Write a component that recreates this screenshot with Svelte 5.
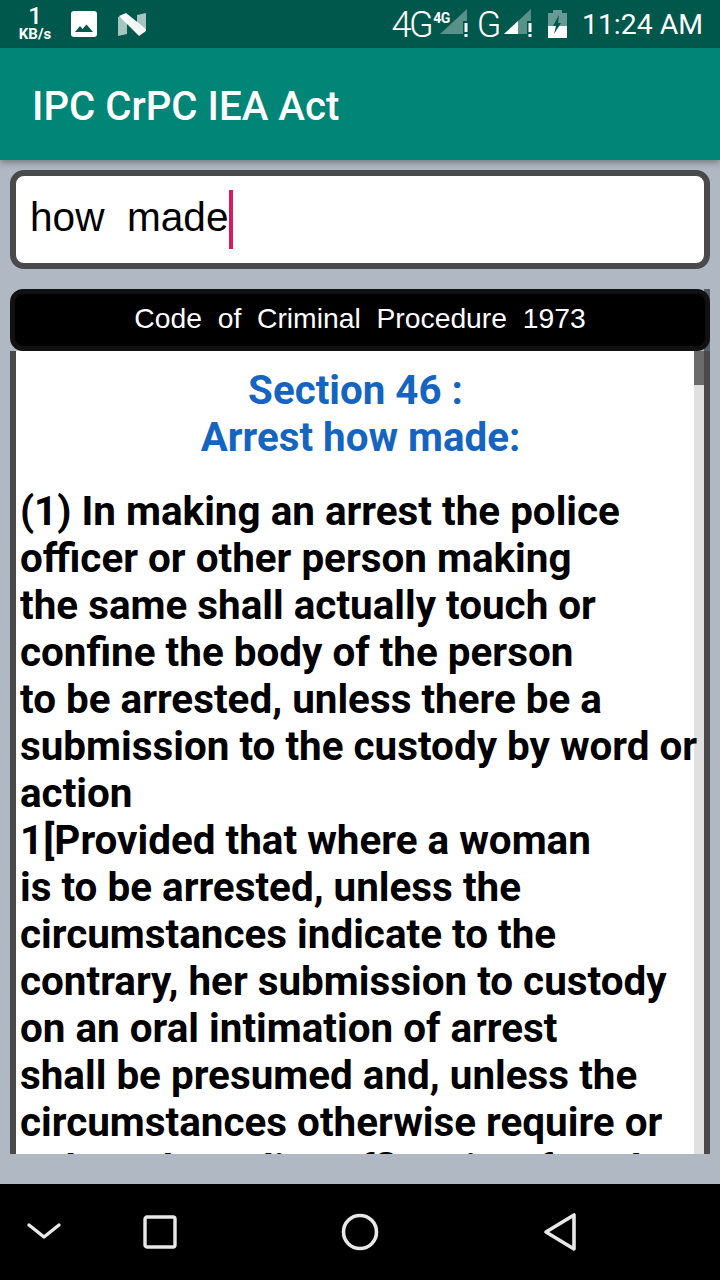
<script lang="ts">
const lines = [
	"(1) In making an arrest the police",
	"officer or other person making",
	"the same shall actually touch or",
	"confine the body of the person",
	"to be arrested, unless there be a",
	"submission to the custody by word or",
	"action",
	"1[Provided that where a woman",
	"is to be arrested, unless the",
	"circumstances indicate to the",
	"contrary, her submission to custody",
	"on an oral intimation of arrest",
	"shall be presumed and, unless the",
	"circumstances otherwise require or",
	"unless the police officer is a female"
];
</script>

<div class="screen">
	<div class="statusbar">
		<div class="status-left">
			<div class="speed">
				<span class="speed-num">1</span>
				<span class="speed-unit">KB/s</span>
			</div>
			<svg class="ic-image" width="26" height="26" viewBox="0 0 26 26">
				<path fill="#fff" fill-rule="evenodd" d="M3 0h20a3 3 0 0 1 3 3v20a3 3 0 0 1-3 3H3a3 3 0 0 1-3-3V3a3 3 0 0 1 3-3zM4 21h18l-6.500-7.500-4 4.500-2.500-3z" />
			</svg>
			<svg class="ic-n" width="28" height="23" viewBox="0 0 28 23">
				<path fill="#fff" fill-opacity="0.65" d="M0 4l9-2v19l-9 2zM19 2l9-2v16l-9-6z" />
				<path fill="#fff" fill-opacity="0.95" d="M1 3l7-3 20 16v2l-7 5z" />
			</svg>
		</div>
		<div class="status-right">
			<span class="net">4G</span>
			<span class="net-small">4G</span>
			<svg class="signal" width="28" height="28" viewBox="0 0 28 28">
				<path fill="#fff" fill-opacity="0.35" d="M0 25L27 0v12h-4v13z" />
				<path fill="#fff" d="M24.500 14h3v9h-3zM24.500 25h3v3h-3z" />
			</svg>
			<span class="net g">G</span>
			<svg class="signal-two" width="28" height="28" viewBox="0 0 28 28">
				<path fill="#fff" fill-opacity="0.35" d="M0 25L27 0v12h-4v13z" />
				<path fill="#fff" d="M0 25l14-13v13z" />
				<path fill="#fff" d="M24.500 14h3v9h-3zM24.500 25h3v3h-3z" />
			</svg>
			<svg class="battery" width="19" height="28" viewBox="0 0 19 28">
				<path fill="#fff" fill-opacity="0.4" d="M5 0h9v3h5v13H0V3h5z" />
				<path fill="#fff" d="M0 16h19v12H0z" />
				<path fill="#00574b" d="M11 5L5 16h3l-2 8 7-11h-3z" />
			</svg>
			<span class="clock">11:24 AM</span>
		</div>
	</div>

	<header class="toolbar">IPC CrPC IEA Act</header>

	<main class="content">
		<div class="search">
			<span class="query">how&nbsp; made</span><span class="caret"></span>
		</div>

		<section class="result">
			<div class="result-title">Code &nbsp;of &nbsp;Criminal &nbsp;Procedure &nbsp;1973</div>
			<div class="result-body">
				<div class="text">
					<h2>Section 46 :&nbsp;<br />Arrest how made:</h2>
					{#each lines as line}
						<div class="line">{line}</div>
					{/each}
				</div>
				<div class="scrolltrack"><div class="scrollthumb"></div></div>
			</div>
		</section>
	</main>

	<nav class="navbar">
		<svg width="36" height="24" viewBox="0 0 36 24">
			<path d="M3 5l15 12L33 5" fill="none" stroke="#e8e8e8" stroke-width="3.4" stroke-linecap="round" stroke-linejoin="round" />
		</svg>
		<svg width="36" height="36" viewBox="0 0 36 36">
			<rect x="3" y="3" width="30" height="30" rx="2" fill="none" stroke="#e8e8e8" stroke-width="3.4" />
		</svg>
		<svg width="40" height="40" viewBox="0 0 40 40">
			<circle cx="20" cy="20" r="16.500" fill="none" stroke="#e8e8e8" stroke-width="3.6" />
		</svg>
		<svg width="36" height="40" viewBox="0 0 36 40">
			<path d="M32 3v34L4 20z" fill="none" stroke="#e8e8e8" stroke-width="3.6" stroke-linejoin="round" />
		</svg>
	</nav>
</div>

<style>
:global(body) {
	margin: 0;
	background: #b0b8c3;
}
.screen {
	width: 720px;
	height: 1280px;
	display: flex;
	flex-direction: column;
	overflow: hidden;
	font-family: Roboto, sans-serif;
}
.statusbar {
	height: 48px;
	flex: none;
	background: #00574b;
	color: #fff;
	display: flex;
	justify-content: space-between;
	align-items: center;
	padding: 0 17px 0 18px;
}
.status-left,
.status-right {
	display: flex;
	align-items: center;
}
.speed {
	display: flex;
	flex-direction: column;
	align-items: center;
	width: 34px;
	font-weight: 500;
}
.speed-num {
	font-size: 24px;
	line-height: 21px;
	height: 21px;
}
.speed-unit {
	font-size: 15px;
	line-height: 15px;
	font-weight: 700;
}
.ic-image {
	margin-left: 19px;
}
.ic-n {
	margin-left: 21px;
}
.net {
	font-size: 36px;
	font-weight: 300;
	letter-spacing: -2.5px;
	line-height: 1;
	margin-top: 2px;
}
.net-small {
	font-size: 14px;
	font-weight: 700;
	letter-spacing: -0.5px;
	align-self: flex-start;
	margin: 5px 0 0 2px;
	position: relative;
}
.signal {
	margin: 0 0 2px -10px;
}
.net.g {
	margin: 2px 5px 0 9px;
}
.signal-two {
	margin-bottom: 2px;
}
.battery {
	margin: 0 15px 0 16px;
}
.clock {
	font-size: 28.4px;
	line-height: 1;
	margin-top: 3px;
}
.toolbar {
	height: 112px;
	flex: none;
	box-sizing: border-box;
	background: #008577;
	color: #fff;
	font-size: 40.2px;
	font-weight: 500;
	line-height: 1;
	display: flex;
	align-items: center;
	padding: 6px 32px 0;
	box-shadow: 0 3px 6px rgba(0, 0, 0, 0.3);
	position: relative;
}
.content {
	flex: 1;
	min-height: 0;
	display: flex;
	flex-direction: column;
	gap: 20px;
	padding: 10px 10px 30px;
}
.search {
	height: 99px;
	flex: none;
	box-sizing: border-box;
	border: 6px solid #4a4a4a;
	border-radius: 14px;
	background: #fff;
	display: flex;
	align-items: center;
	padding: 0 0 0 14px;
	font-family: "Liberation Sans", sans-serif;
	font-size: 40.6px;
	color: #000;
}
.query {
	margin-top: -4px;
}
.caret {
	width: 4px;
	height: 59px;
	background: #d81b60;
}
.result {
	flex: 1;
	min-height: 0;
	display: flex;
	flex-direction: column;
	background: linear-gradient(to left, #56606c 6px, transparent 6px);
}
.result-title {
	height: 62px;
	flex: none;
	box-sizing: border-box;
	background: #000;
	border: 5px solid #111;
	border-radius: 13px;
	padding-bottom: 3px;
	color: #fff;
	font-family: "Liberation Sans", sans-serif;
	font-size: 28.3px;
	display: flex;
	align-items: center;
	justify-content: center;
}
.result-body {
	flex: 1;
	min-height: 0;
	display: flex;
	background: #fff;
	border-left: 6px solid #4a4a4a;
	border-right: 6px solid #4a4a4a;
	overflow: hidden;
}
.text {
	flex: 1;
	min-width: 0;
	padding: 16px 0 0 4px;
	color: #000;
	font-weight: 700;
	font-size: 40.4px;
	line-height: 47px;
	white-space: nowrap;
	position: relative;
	z-index: 1;
}
h2 {
	margin: 0 -7px 27px 0;
	text-align: center;
	color: #1565c0;
	font-size: 40.3px;
	line-height: 47px;
	font-weight: 700;
}
.scrolltrack {
	width: 10px;
	flex: none;
	background: #e0e0e0;
}
.scrollthumb {
	height: 34px;
	background: #6b6b6b;
}
.navbar {
	height: 96px;
	flex: none;
	background: #000;
	display: grid;
	grid-template-columns: 88px 144px 256px 144px 88px;
	align-items: center;
	justify-items: center;
}
</style>
